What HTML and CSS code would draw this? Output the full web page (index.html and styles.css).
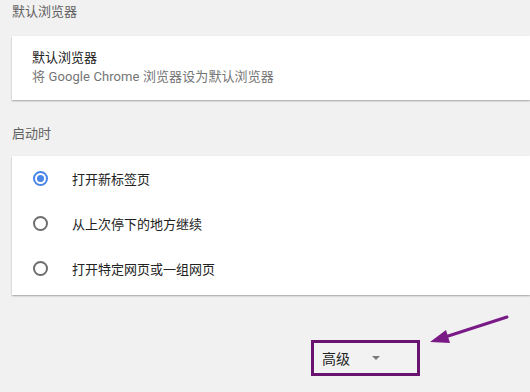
FILE: index.html
```html
<!DOCTYPE html>
<html lang="zh-CN">
<head>
    <meta charset="UTF-8">
    <title>设置</title>
    <link rel="stylesheet" href="styles.css">
</head>
<body>
    <div class="page">
        <h2 class="section-title">默认浏览器</h2>
        <div class="card default-card">
            <div class="card-title">默认浏览器</div>
            <div class="card-sub">将 Google Chrome 浏览器设为默认浏览器</div>
        </div>

        <h2 class="section-title startup-title">启动时</h2>
        <div class="card startup-card">
            <label class="radio-row">
                <span class="radio checked"></span>
                <span class="radio-label">打开新标签页</span>
            </label>
            <label class="radio-row">
                <span class="radio"></span>
                <span class="radio-label">从上次停下的地方继续</span>
            </label>
            <label class="radio-row">
                <span class="radio"></span>
                <span class="radio-label">打开特定网页或一组网页</span>
            </label>
        </div>

        <div class="advanced-wrap">
            <div class="advanced">
                <span class="advanced-text">高级</span>
                <span class="caret"></span>
            </div>
        </div>
    </div>

    <!-- annotation arrow -->
    <svg class="arrow" width="530" height="392" viewBox="0 0 530 392">
        <line x1="507" y1="317" x2="442" y2="338" stroke="#7a1a86" stroke-width="3" stroke-linecap="round"/>
        <polygon points="430,342 446,330 450,343" fill="#7a1a86"/>
    </svg>
</body>
</html>
```

FILE: styles.css
```css
body {
    margin: 0;
    background-color: #f1f1f1;
    font-family: Roboto, "Noto Sans CJK SC", sans-serif;
    font-size: 13px;
    color: #333;
    overflow: hidden;
    position: relative;
    height: 392px;
}

.page {
    padding-left: 12px;
}

.section-title {
    margin: 0;
    padding-top: 3px;
    font-size: 13px;
    font-weight: normal;
    line-height: 18px;
    color: #616161;
}

.card {
    background-color: #fff;
    box-shadow: 0 1px 1px rgba(0, 0, 0, 0.12), 0 1px 2px rgba(0, 0, 0, 0.2);
}

.default-card {
    margin-top: 15px;
    padding: 12px 20px 14px;
}

.card-title {
    line-height: 19px;
    color: #222;
}

.card-sub {
    line-height: 19px;
    color: #757575;
    letter-spacing: 0.1px;
}

.startup-title {
    margin-top: 22px;
}

.startup-card {
    margin-top: 13px;
    padding-bottom: 4px;
}

.radio-row {
    display: flex;
    align-items: center;
    height: 45px;
    padding-left: 21px;
}

.radio {
    box-sizing: border-box;
    width: 15px;
    height: 15px;
    border: 2px solid #6e6e6e;
    border-radius: 50%;
    display: flex;
    align-items: center;
    justify-content: center;
}

.radio.checked {
    border-color: #4a86e8;
}

.radio.checked::after {
    content: "";
    width: 7px;
    height: 7px;
    border-radius: 50%;
    background-color: #4a86e8;
}

.radio-label {
    margin-left: 24px;
    color: #222;
}

.advanced-wrap {
    display: flex;
    padding-top: 45px;
    padding-left: 299px;
}

.advanced {
    box-sizing: border-box;
    width: 109px;
    height: 36px;
    border: 3px solid #6a1270;
    display: flex;
    align-items: center;
    padding-left: 8px;
    background-color: #f2f2f2;
}

.advanced-text {
    font-size: 14px;
    color: #222;
}

.caret {
    margin-left: 22px;
    width: 0;
    height: 0;
    border-left: 4px solid transparent;
    border-right: 4px solid transparent;
    border-top: 4px solid #7a7a7a;
}

.arrow {
    position: absolute;
    left: 0;
    top: 0;
    pointer-events: none;
}
```
